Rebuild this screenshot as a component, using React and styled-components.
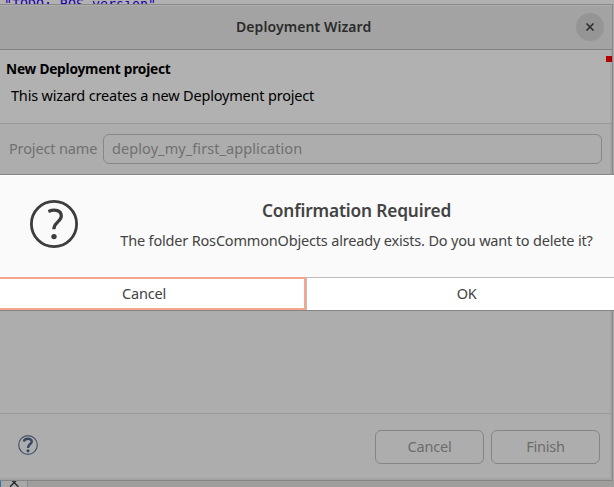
import React from "react";
import styled, { createGlobalStyle } from "styled-components";

const GlobalStyle = createGlobalStyle`
  *, *::before, *::after { box-sizing: border-box; }
  body { margin: 0; overflow: hidden; font-family: "Noto Sans", "Open Sans", sans-serif; }
`;

const Screen = styled.div`
  position: relative;
  width: 614px;
  height: 487px;
  overflow: hidden;
  display: flex;
  flex-direction: column;
  background: #aeaeae;
`;

const Label = styled.span`
  display: block;
  flex: none;
  white-space: pre;
  font-size: ${(p) => p.$size || 14.5}px;
  font-weight: ${(p) => p.$weight || 400};
  letter-spacing: ${(p) => p.$spacing || 0}px;
  line-height: 20px;
  color: ${(p) => p.$color || "#434343"};
`;

const EditorStrip = styled.div`
  flex: none;
  height: 4px;
  overflow: hidden;
  padding-left: 4px;
  background: #b1b1b1;
`;

const CodeText = styled.div`
  margin-top: -4px;
  font: 13.3px/17px "DejaVu Sans Mono", monospace;
  white-space: pre;
  color: #1b00ad;
`;

const WindowRow = styled.div`
  flex: none;
  display: flex;
  height: 477px;
`;

const Window = styled.div`
  width: 613px;
  display: flex;
  flex-direction: column;
  border-top: 1px solid #898989;
  border-right: 1px solid #878787;
  border-bottom: 1px solid #858585;
  background: #adadad;
  box-shadow: inset -2px -2px 0 #a3a3a3;
`;

const Behind = styled.div`
  flex: 1;
  background: #aaa;
`;

const TitleBar = styled.header`
  height: 45px;
  display: flex;
  align-items: center;
  justify-content: flex-end;
  padding: 0 8px 1px 0;
  border-top: 1px solid #aeaeae;
  border-bottom: 1px solid #828282;
  background: #a3a3a3;
`;

const TitleText = styled.div`
  flex: 1;
  padding-left: 236px;
`;

const CloseButton = styled.button`
  width: 28px;
  height: 28px;
  padding: 0;
  border: 0;
  border-radius: 50%;
  display: grid;
  place-items: center;
  background: #959595;
`;

const Banner = styled.section`
  height: 74px;
  display: flex;
  justify-content: space-between;
  padding: 6px 0 0 6px;
  border-bottom: 1px solid #999;
  background: #b1b1b1;
  box-shadow: inset -2px 0 0 #a7a7a7;
`;

const BannerText = styled.div`
  display: flex;
  flex-direction: column;
  gap: 6px;
  padding-top: 3px;
`;

const Inset = styled.div`
  padding-left: 5px;
`;

const ErrorMark = styled.div`
  width: 6px;
  height: 6px;
  background: linear-gradient(90deg, #b90000 4px, #a90000 4px);
`;

const Body = styled.section`
  height: 290px;
  padding: 10px 10px 0 9px;
  border-bottom: 1px solid #999;
`;

const Field = styled.div`
  display: flex;
  align-items: center;
`;

const FieldName = styled.div`
  width: 94px;
  padding-bottom: 2px;
`;

const TextInput = styled.div`
  flex: 1;
  height: 30px;
  display: flex;
  align-items: center;
  padding: 0 0 2px 8px;
  border: 1px solid #878787;
  border-radius: 6px;
`;

const Footer = styled.footer`
  flex: 1;
  display: flex;
  align-items: flex-start;
  padding: 16px 12px 0 18px;
`;

const HelpIcon = styled.svg`
  display: block;
  margin-top: 5px;
  margin-right: auto;
`;

const FooterButton = styled.button`
  width: 109px;
  height: 34px;
  margin-left: 7px;
  padding: 0 0 2px;
  display: flex;
  align-items: center;
  justify-content: center;
  border: 1px solid #858585;
  border-radius: 6px;
  background: transparent;
  font-family: inherit;
`;

const TabStrip = styled.div`
  flex: none;
  height: 6px;
  display: flex;
  background: #a09e9c;
`;

const Tab = styled.div`
  width: 28px;
  height: 6px;
  overflow: hidden;
  border-left: 1px solid #3272a4;
  border-right: 1px solid #888;
  background: #a8a8a8;
`;

const TabClose = styled.svg`
  display: block;
`;

const Dialog = styled.section`
  position: absolute;
  top: 174px;
  left: 0;
  width: 614px;
  height: 137px;
  display: flex;
  flex-direction: column;
  border-top: 1px solid #858585;
  border-bottom: 1px solid #858585;
  background: #fafafa;
`;

const Message = styled.div`
  height: 102px;
  display: flex;
  padding: 24px 0 0 30px;
  border-top: 1px solid #fff;
`;

const MessageText = styled.div`
  width: 473px;
  margin-left: 42px;
  padding-top: 1px;
  display: flex;
  flex-direction: column;
  align-items: center;
  gap: 9px;
`;

const Actions = styled.div`
  flex: 1;
  display: flex;
  background: #fff;
`;

const Action = styled.button`
  width: ${(p) => p.$width}px;
  padding: 0 ${(p) => p.$padRight || 0}px 2px ${(p) => p.$padLeft || 0}px;
  display: flex;
  align-items: center;
  justify-content: center;
  background: #fff;
  font-family: inherit;
  border: 0 solid ${(p) => (p.$focused ? "#f4a68e" : "#bebebe")};
  border-width: ${(p) => (p.$focused ? "2px 2px 2px 0" : "1px 0 0 1px")};
`;

export default function App() {
  return (
    <Screen>
      <GlobalStyle />
      <EditorStrip>
        <CodeText>"TODO: ROS version"</CodeText>
      </EditorStrip>
      <WindowRow>
        <Window>
          <TitleBar>
            <TitleText>
              <Label $weight={600} $size={14} $spacing={0.08} $color="#2b2b2b">Deployment Wizard</Label>
            </TitleText>
            <CloseButton aria-label="Close">
              <svg width="8" height="8" viewBox="0 0 8 8">
                <path d="M0.5 0.5 7.5 7.5M7.5 0.5 0.5 7.5" stroke="#292929" strokeWidth="1.5" />
              </svg>
            </CloseButton>
          </TitleBar>
          <Banner>
            <BannerText>
              <Label $weight={700} $size={13.7} $spacing={-0.23} $color="#000">New Deployment project</Label>
              <Inset>
                <Label $spacing={-0.19} $color="#000">This wizard creates a new Deployment project</Label>
              </Inset>
            </BannerText>
            <ErrorMark />
          </Banner>
          <Body>
            <Field>
              <FieldName>
                <Label $spacing={-0.15} $color="#707070">Project name</Label>
              </FieldName>
              <TextInput>
                <Label $spacing={0.08} $color="#707070">deploy_my_first_application</Label>
              </TextInput>
            </Field>
          </Body>
          <Footer>
            <HelpIcon width="20" height="20" viewBox="0 0 20 20" fill="none">
              <circle cx="10" cy="10" r="9.3" stroke="#46536a" strokeWidth="1.2" />
              <path d="M5.9 6.6C6.3 3 13.8 2.8 13.8 6.5C13.8 9.2 10 9 10 13" stroke="#37455e" strokeWidth="2.4" />
              <circle cx="10" cy="15.7" r="1.5" fill="#37455e" />
            </HelpIcon>
            <FooterButton><Label $spacing={-0.2} $color="#6c6c6c">Cancel</Label></FooterButton>
            <FooterButton><Label $spacing={-0.2} $color="#6c6c6c">Finish</Label></FooterButton>
          </Footer>
        </Window>
        <Behind />
      </WindowRow>
      <TabStrip>
        <Tab>
          <TabClose width="26" height="6" viewBox="0 0 26 6">
            <path d="M9 -2.6 17.4 5.8M17.4 -2.6 9 5.8" stroke="#242424" strokeWidth="1.3" />
          </TabClose>
        </Tab>
      </TabStrip>
      <Dialog role="dialog">
        <Message>
          <svg width="48" height="48" viewBox="0 0 48 48" fill="none">
            <circle cx="24" cy="24" r="22.6" stroke="#3d3d3d" strokeWidth="2.8" />
            <path d="M18.4 11.4C25 8.7 31.3 10.5 31.3 16C31.3 21.8 23.8 22.2 23.8 29.3" stroke="#3d3d3d" strokeWidth="3.2" />
            <circle cx="24" cy="36.6" r="2.7" fill="#3d3d3d" />
          </svg>
          <MessageText>
            <Label $weight={600} $size={17.3} $spacing={-0.15}>Confirmation Required</Label>
            <Label $spacing={-0.18}>The folder RosCommonObjects already exists. Do you want to delete it?</Label>
          </MessageText>
        </Message>
        <Actions>
          <Action $focused $width={306} $padRight={16}><Label $spacing={-0.2}>Cancel</Label></Action>
          <Action $width={308} $padLeft={12}><Label $spacing={-0.4}>OK</Label></Action>
        </Actions>
      </Dialog>
    </Screen>
  );
}
